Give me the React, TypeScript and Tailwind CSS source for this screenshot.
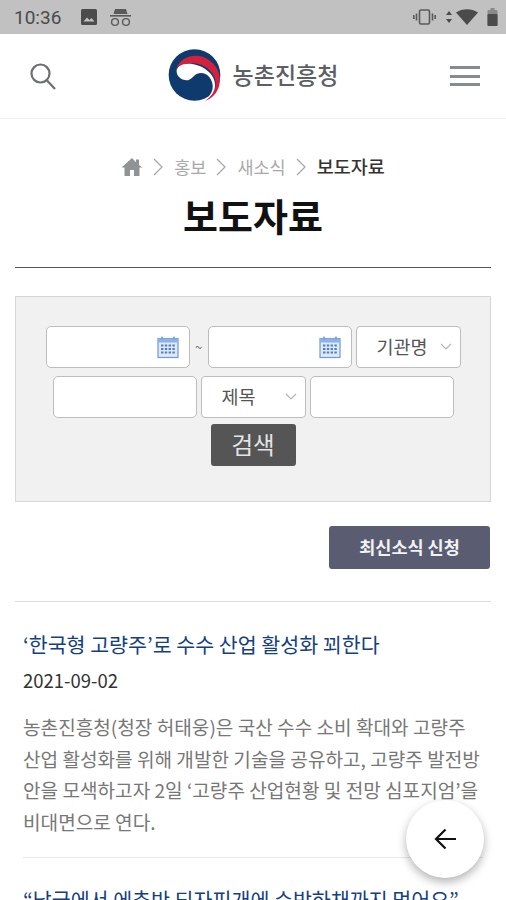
import React from 'react';

const font = { fontFamily: '"Noto Sans CJK KR", "Noto Sans", sans-serif' };

function CalendarIcon() {
    return (
        <svg width="22" height="24" viewBox="0 0 22 24" className="shrink-0">
            <rect x="1" y="3.500" width="20" height="19" fill="#dfe9f8" stroke="#6f9ad8" strokeWidth="1.200" />
            <rect x="1" y="3.500" width="20" height="4" fill="#8fb2e4" />
            <path d="M5 1.500v3M17 1.500v3" stroke="#6f9ad8" strokeWidth="1.400" />
            <path d="M4 10.500h14M4 14h14M4 17.500h14" stroke="#4f7fc6" strokeWidth="1.800" strokeDasharray="2.400 1.400" />
        </svg>
    );
}

function Chevron() {
    return (
        <svg width="12" height="8" viewBox="0 0 12 8" fill="none" stroke="#b5b5b5" strokeWidth="1.200">
            <path d="M1 1l5 5 5-5" />
        </svg>
    );
}

function Logo() {
    return (
        <svg width="53" height="52" viewBox="0 0 160 156" className="shrink-0">
            <circle cx="80" cy="78" r="78" fill="#0f3a6e" />
            <path d="M26 56C40 24 78 12 112 26c34 16 54 54 40 92-8 20-22 32-40 38 16-12 30-28 32-48 2-28-22-58-56-64-24-4-46 2-62 12z" fill="#d3203c" />
            <path d="M26 66c0-12 14-22 36-22 38 0 80 28 80 64 0 20-12 36-30 46 18-14 26-32 22-50-4-22-24-38-46-30-12 6-18 20-32 20-16 0-30-12-30-28z" fill="#fff" />
        </svg>
    );
}

function Field({ width, icon }: { width: string; icon?: boolean }) {
    return (
        <div className={`${width} h-[42px] bg-white border border-[#bdbdbd] rounded-[5px] flex items-center justify-end pr-[10px]`}>
            {icon && <CalendarIcon />}
        </div>
    );
}

function SelectBox({ width, label, pad }: { width: string; label: string; pad: string }) {
    return (
        <div className={`${width} h-[42px] bg-white border border-[#bdbdbd] rounded-[4px] flex items-center justify-between ${pad} pr-[8px] text-[18.500px] text-[#555]`}>
            <span>{label}</span>
            <Chevron />
        </div>
    );
}

function Sep() {
    return (
        <svg width="11" height="18" viewBox="0 0 11 18" fill="none" stroke="#a9a9a9" strokeWidth="1.300">
            <path d="M1 1l8 8-8 8" />
        </svg>
    );
}

export default function App() {
    return (
        <div className="relative w-[506px] h-[900px] overflow-hidden bg-white" style={font}>
            {/* status bar */}
            <div className="h-[34px] bg-[#c1c1c1] flex items-center justify-between pl-[14px] pr-[8px] text-[#4b4b4b]">
                <div className="flex items-center">
                    <span className="w-[67px] text-[19px] leading-none" style={{ fontFamily: 'Roboto, sans-serif' }}>10:36</span>
                    <svg width="16" height="16" viewBox="0 0 16 16">
                        <rect width="16" height="16" rx="1.500" fill="#4b4b4b" />
                        <path d="M2.500 12.500l3.500-4 2.500 2.500 2-2 3 3.500z" fill="#c1c1c1" />
                    </svg>
                    <svg width="21" height="19" viewBox="0 0 21 19" fill="#5a5a5a" className="ml-[13px]">
                        <path d="M5 1h11l1.500 5h-14z" />
                        <rect x="0" y="7" width="21" height="1.600" />
                        <circle cx="5" cy="14" r="3.400" fill="none" stroke="#5a5a5a" strokeWidth="1.400" />
                        <circle cx="16" cy="14" r="3.400" fill="none" stroke="#5a5a5a" strokeWidth="1.400" />
                    </svg>
                </div>
                <div className="flex items-center gap-[9px]">
                    <svg width="23" height="16" viewBox="0 0 23 16" fill="none" stroke="#5a5a5a" strokeWidth="1.600">
                        <rect x="6.500" y="1" width="10" height="14" rx="1.500" />
                        <path d="M3.500 4.500v7M19.500 4.500v7M0.800 6v4M22.200 6v4" />
                    </svg>
                    <div className="flex items-center gap-[3px]">
                        <svg width="8" height="14" viewBox="0 0 8 14" fill="#4b4b4b">
                            <path d="M4 1l3 4H1zM4 13l3-4H1z" />
                        </svg>
                        <svg width="22" height="16" viewBox="0 0 22 16" fill="#4b4b4b">
                            <path d="M0 3.500C6-1 16-1 22 3.500L11 16z" />
                        </svg>
                    </div>
                    <svg width="11" height="18" viewBox="0 0 11 18">
                        <rect x="3.500" y="0" width="4" height="3" fill="#8a8a8a" />
                        <rect x="0.500" y="2" width="10" height="16" rx="1" fill="#8a8a8a" />
                        <rect x="0.500" y="6" width="10" height="12" rx="1" fill="#4b4b4b" />
                    </svg>
                </div>
            </div>

            {/* header */}
            <header className="h-[85px] border-b border-[#efefef] flex items-center justify-between pl-[30px] pr-[26px]">
                <svg width="26" height="27" viewBox="0 0 26 27" fill="none" stroke="#6b6f72" strokeWidth="2.200">
                    <circle cx="10.500" cy="10.500" r="9" />
                    <path d="M17 17.500l8 8.500" />
                </svg>
                <div className="flex items-center gap-[12px] -mt-[3px]">
                    <Logo />
                    <span className="text-[23px] font-medium text-[#5c6064]">농촌진흥청</span>
                </div>
                <div className="flex flex-col gap-[5.500px] w-[30px]">
                    <div className="h-[3px] bg-[#858b8f]" />
                    <div className="h-[3px] bg-[#858b8f]" />
                    <div className="h-[3px] bg-[#858b8f]" />
                </div>
            </header>

            {/* breadcrumb + title */}
            <div className="flex items-center justify-center gap-[10px] mt-[34px] h-[28px] text-[17.500px] text-[#a9a9a9]">
                <svg width="22" height="20" viewBox="0 0 22 20" fill="#8f9396">
                    <path d="M11 1L0.500 10.500h3V19h5.500v-6h4v6h5.500v-8.500h3L18 8V2.500h-3v2.800z" />
                </svg>
                <Sep />
                <span>홍보</span>
                <Sep />
                <span>새소식</span>
                <Sep />
                <span className="text-[18.500px] text-[#333] font-medium">보도자료</span>
            </div>
            <h1 className="text-center text-[38px] font-bold text-[#111] leading-[54px] mt-[7px]">보도자료</h1>

            <div className="mx-[15px] mt-[25px] border-t border-[#555]" />

            {/* search form */}
            <div className="mx-[15px] mt-[28px] h-[206px] bg-[#f1f1f1] border border-[#d6d6d6] pt-[29px] flex flex-col items-center">
                <div className="flex items-center">
                    <Field width="w-[144px]" icon />
                    <span className="w-[18px] text-center text-[13px] text-[#777]">~</span>
                    <Field width="w-[144px]" icon />
                    <div className="ml-[4px]"><SelectBox width="w-[105px]" label="기관명" pad="pl-[20px]" /></div>
                </div>
                <div className="flex items-center gap-[4px] mt-[8px]">
                    <Field width="w-[144px]" />
                    <SelectBox width="w-[105px]" label="제목" pad="pl-[20px]" />
                    <Field width="w-[144px]" />
                </div>
                <button className="mt-[6px] w-[85px] h-[42px] bg-[#555] rounded-[3px] text-[23.500px] text-[#e4e4e4]">검색</button>
            </div>

            <div className="flex justify-end mt-[24px] mr-[16px]">
                <button className="w-[161px] h-[43px] bg-[#5a5d72] rounded-[3px] text-[17.500px] font-bold text-[#f2f2f2]">최신소식 신청</button>
            </div>

            <div className="mx-[15px] mt-[32px] border-t border-[#dcdcdc]" />

            {/* articles */}
            <div className="px-[23px]">
                <h2 className="mt-[28px] text-[20.600px] leading-[28px] text-[#14407f] whitespace-nowrap">‘한국형 고량주’로 수수 산업 활성화 꾀한다</h2>
                <p className="mt-[9px] text-[18.500px] leading-[26px] text-[#333]">2021-09-02</p>
                <p className="mt-[19px] text-[19.100px] leading-[31.500px] text-[#777] whitespace-nowrap">
                    농촌진흥청(청장 허태웅)은 국산 수수 소비 확대와 고량주<br />
                    산업 활성화를 위해 개발한 기술을 공유하고, 고량주 발전방<br />
                    안을 모색하고자 2일 ‘고량주 산업현황 및 전망 심포지엄’을<br />
                    비대면으로 연다.
                </p>
                <div className="mt-[19px] border-t border-[#e8e8e8]" />
                <h2 className="mt-[27px] text-[20.600px] leading-[28px] text-[#14407f] whitespace-nowrap">“남극에서 에츄반 되자피개에 수박하채까지 먹어요”</h2>
            </div>

            {/* floating back button */}
            <button className="absolute left-[406px] top-[800px] w-[78px] h-[78px] rounded-full bg-white shadow-[0_4px_10px_rgba(0,0,0,0.3)] flex items-center justify-center">
                <svg width="22" height="22" viewBox="0 0 22 22" fill="none" stroke="#111" strokeWidth="2.200">
                    <path d="M22 11H2M11.500 1.500L2 11l9.500 9.500" />
                </svg>
            </button>
        </div>
    );
}
